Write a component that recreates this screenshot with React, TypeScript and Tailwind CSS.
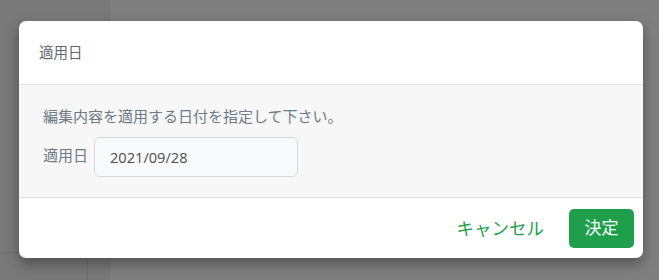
import { useState } from 'react'

export default function App() {
  const [date, setDate] = useState('2021/09/28')

  return (
    <div
      className="relative w-[659px] h-[280px] overflow-hidden bg-white"
      style={{ fontFamily: '"Open Sans", "Noto Sans CJK JP", sans-serif' }}
    >
      {/* page behind the modal */}
      <div className="flex h-full">
        <div className="w-[110px] h-full flex flex-col border-r border-[#e8e8e8] bg-[#f3f3f3]">
          <div className="flex-1" />
          <div className="h-[28px] flex border-t border-[#dcdcdc]">
            <div className="w-[88px] border-r border-[#dcdcdc]" />
            <div className="flex-1" />
          </div>
        </div>
        <div className="flex-1 bg-white" />
      </div>

      {/* backdrop */}
      <div className="absolute inset-0 bg-black/50" />

      {/* modal */}
      <div className="absolute left-[19px] top-[21px] w-[624px] bg-white rounded-[7px] shadow-[0_6px_14px_rgba(0,0,0,0.35)] overflow-hidden">
        <div className="h-[64px] flex items-center px-5 border-b border-[#dfe3e8]">
          <h2 className="text-[14.5px] text-[#5f6670]">適用日</h2>
        </div>

        <div className="bg-[#f7f7f7] px-6 pt-[21px] pb-5 border-b border-[#dfe3e8]">
          <p className="text-[15px] leading-5 text-[#6c7a89]">編集内容を適用する日付を指定して下さい。</p>
          <div className="flex items-start gap-[6px] mt-[11px]">
            <label className="text-[15px] leading-5 text-[#6c7a89] mt-[8px]">適用日</label>
            <input
              value={date}
              onChange={e => setDate(e.target.value)}
              className="w-[204px] h-[40px] rounded-[5px] border border-[#d3d9e0] bg-[#f8f9fa] px-[15px] text-[14.6px] text-[#4a4f55] outline-none"
            />
          </div>
        </div>

        <div className="h-[60px] flex items-center justify-end gap-[25px] pr-[9px]">
          <button className="text-[17.5px] text-[#23a04c]">キャンセル</button>
          <button className="w-[65px] h-[39px] rounded-[5px] bg-[#1f9f4b] text-white text-[17px]">決定</button>
        </div>
      </div>
    </div>
  )
}
